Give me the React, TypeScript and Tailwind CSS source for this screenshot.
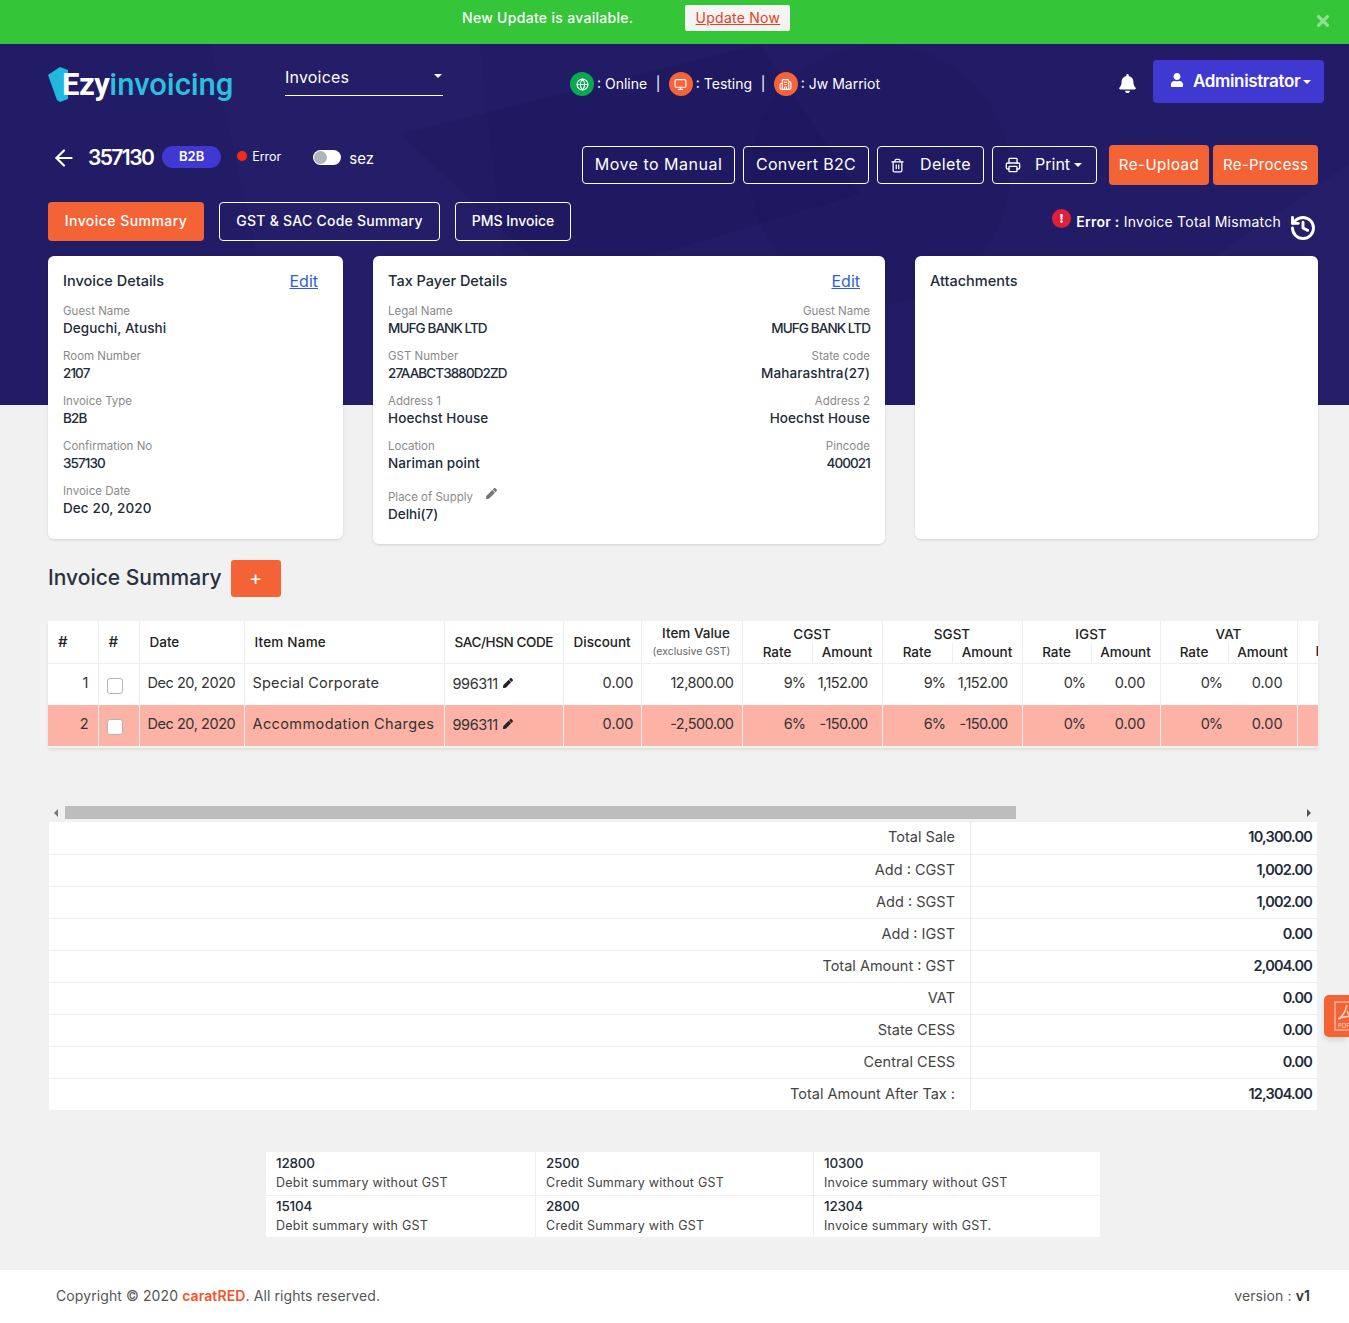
import React from 'react';
import { ArrowLeft, Globe, Monitor, Building2, Printer, Trash2, History } from 'lucide-react';
import { FaBell, FaUser, FaTimes, FaPen, FaExclamation } from 'react-icons/fa';

const invoiceFields = [
  ['Guest Name', 'Deguchi, Atushi'],
  ['Room Number', '2107'],
  ['Invoice Type', 'B2B'],
  ['Confirmation No', '357130'],
  ['Invoice Date', 'Dec 20, 2020'],
];

const payerFields = [
  ['Legal Name', 'MUFG BANK LTD', 'Guest Name', 'MUFG BANK LTD'],
  ['GST Number', '27AABCT3880D2ZD', 'State code', 'Maharashtra(27)'],
  ['Address 1', 'Hoechst House', 'Address 2', 'Hoechst House'],
  ['Location', 'Nariman point', 'Pincode', '400021'],
];

const rows = [
  {
    n: '1',
    name: 'Special Corporate',
    value: '12,800.00',
    rate: '9%',
    amount: '1,152.00',
    bg: 'bg-white',
  },
  {
    n: '2',
    name: 'Accommodation Charges',
    value: '-2,500.00',
    rate: '6%',
    amount: '-150.00',
    bg: 'bg-[#fdb2a6]',
  },
];

const totals = [
  ['Total Sale', '10,300.00'],
  ['Add : CGST', '1,002.00'],
  ['Add : SGST', '1,002.00'],
  ['Add : IGST', '0.00'],
  ['Total Amount : GST', '2,004.00'],
  ['VAT', '0.00'],
  ['State CESS', '0.00'],
  ['Central CESS', '0.00'],
  ['Total Amount After Tax :', '12,304.00'],
];

const summary = [
  [
    ['12800', 'Debit summary without GST'],
    ['2500', 'Credit Summary without GST'],
    ['10300', 'Invoice summary without GST'],
  ],
  [
    ['15104', 'Debit summary with GST'],
    ['2800', 'Credit Summary with GST'],
    ['12304', 'Invoice summary with GST.'],
  ],
];

const th = 'border-r border-[#eeeeee] font-medium text-[13.5px] text-[#222222] p-0';
const td = 'border-r border-[#eeeeee] text-[14.5px] text-[#333333] p-0 pb-[3px]';
const tdRate = 'p-0 pb-[3px] text-right text-[14.5px] text-[#333333] tracking-[-1px]';

function Field({ label, value, right }: { label: string; value: string; right?: boolean }) {
  const caps = value === value.toUpperCase();
  return (
    <div className={`h-[45px] ${right ? 'text-right' : ''}`}>
      <div className="text-[11.5px] leading-[16px] text-[#8a8a8a]">{label}</div>
      <div className={`mt-[-1px] text-[13.5px] leading-[20px] font-medium text-[#222b3a] ${caps ? 'tracking-[-0.9px]' : 'tracking-[0.1px]'}`}>
        {value}
      </div>
    </div>
  );
}

function StatusIcon({ color, children }: { color: string; children: React.ReactNode }) {
  return (
    <span className={`flex h-[24px] w-[24px] items-center justify-center rounded-full text-white ${color}`}>
      {children}
    </span>
  );
}

export default function App() {
  return (
    <div className="relative min-h-[1323px] bg-[#f1f1f1] font-['Inter',sans-serif]">
      {/* update banner */}
      <div className="relative flex h-[44px] items-start bg-[#34c538] pt-[5px]">
        <span className="ml-[462px] mt-[2px] text-[14px] font-medium tracking-[0.3px] text-white">New Update is available.</span>
        <a className="ml-[52px] flex h-[26px] w-[105px] items-center justify-center rounded-[2px] bg-[#f4f4f4] pb-[1px] text-[14px] tracking-[0.25px] text-[#e8401c] underline">
          Update Now
        </a>
        <FaTimes className="absolute right-[17px] top-[12px] text-[#8fdf92]" size={18} />
      </div>

      {/* hero */}
      <div className="relative h-[361px] overflow-hidden bg-[#221c67] pl-[48px] pr-[31px] text-white">
        <svg className="absolute inset-0 h-full w-full" viewBox="0 0 1349 361" preserveAspectRatio="none">
          <path d="M210 0 L290 361 L520 361 L480 0 Z" fill="#ffffff" opacity="0.012" />
          <path d="M400 90 L760 0 L860 150 L560 240 Z" fill="#000033" opacity="0.08" />
          <circle cx="880" cy="130" r="130" fill="#000033" opacity="0.06" />
          <path d="M1000 361 L1349 120 L1349 361 Z" fill="#ffffff" opacity="0.015" />
        </svg>

        <div className="relative flex h-[102px] items-start">
          <div className="mt-[21px] flex w-[237px] shrink-0 items-center">
            <svg width="20" height="36" viewBox="0 0 20 36" className="mr-[-6px] shrink-0">
              <path d="M0 8 L12 0 L20 3 L20 32 L12 35 L9 33 Z" fill="#21b8e0" />
            </svg>
            <span className="mt-[1px] font-['Roboto',sans-serif] text-[31px] leading-[38px] font-bold tracking-[-0.5px]">Ezy</span>
            <span className="mt-[1px] font-['Roboto',sans-serif] text-[31px] leading-[38px] font-medium tracking-[-0.1px] text-[#2bc0dd]">invoicing</span>
          </div>
          <div className="mt-[22px] flex h-[30px] w-[158px] shrink-0 justify-between border-b border-white">
            <span className="text-[16px] leading-[22px] tracking-[0.2px]">Invoices</span>
            <span className="mr-[1px] mt-[8px] h-0 w-0 border-x-[4.5px] border-t-[4.5px] border-x-transparent border-t-white" />
          </div>
          <div className="ml-[127px] mt-[28px] flex shrink-0 items-center text-[14px]">
            <StatusIcon color="bg-[#0aa84f]"><Globe size={13} /></StatusIcon>
            <span className="ml-[3px] pb-[2px]">: Online</span>
            <span className="mx-[8.5px] pb-[2px]">|</span>
            <StatusIcon color="bg-[#f4633a]"><Monitor size={13} /></StatusIcon>
            <span className="ml-[3px] pb-[2px]">: Testing</span>
            <span className="mx-[8.5px] pb-[2px]">|</span>
            <StatusIcon color="bg-[#f4633a]"><Building2 size={13} /></StatusIcon>
            <span className="ml-[3px] pb-[2px]">: Jw Marriot</span>
          </div>
          <FaBell className="ml-auto mt-[30px] mr-[16px] shrink-0" size={19} />
          <div className="mr-[-6px] mt-[16px] flex h-[43px] w-[171px] shrink-0 items-center rounded-[4px] bg-[#3f39d1] pl-[17px] text-[17px] font-semibold">
            <FaUser size={14} className="mb-[4px]" />
            <span className="ml-[9px] pt-[1px] tracking-[-0.35px]">Administrator</span>
            <span className="ml-[3px] h-0 w-0 border-x-[4.5px] border-t-[4.5px] border-x-transparent border-t-white" />
          </div>
        </div>

        <div className="relative flex h-[56px] items-start">
          <ArrowLeft size={26} strokeWidth={2} className="ml-[3px] mt-[-1px] shrink-0" />
          <span className="ml-[11px] text-[21px] leading-[24px] font-semibold tracking-[-1.6px]">357130</span>
          <span className="ml-[9px] flex h-[22px] w-[59px] items-center justify-center rounded-full bg-[#3f39d1] text-[13px] font-semibold">B2B</span>
          <span className="ml-[16px] mt-[5px] h-[10px] w-[10px] rounded-full bg-[#f62b12]" />
          <span className="ml-[5px] mt-[2px] text-[12.5px] leading-[18px]">Error</span>
          <span className="relative ml-[32px] mt-[4px] h-[15px] w-[28px] rounded-full bg-white">
            <span className="absolute left-[1px] top-[1px] h-[13px] w-[13px] rounded-full bg-[#adb5bd]" />
          </span>
          <span className="ml-[8px] mt-[2px] text-[15px] leading-[22px]">sez</span>

          <button className="ml-[208px] h-[38px] w-[153px] shrink-0 rounded-[4px] border border-white pb-[2px] text-[16px] tracking-[0.5px]">Move to Manual</button>
          <button className="ml-[8px] h-[38px] w-[126px] shrink-0 rounded-[4px] border border-white pb-[2px] text-[16px] tracking-[0.35px]">Convert B2C</button>
          <button className="ml-[8px] flex h-[38px] w-[107px] shrink-0 items-center rounded-[4px] border border-white pl-[12px] text-[16px] tracking-[0.4px]">
            <Trash2 size={15} />
            <span className="ml-[15px] pb-[2px]">Delete</span>
          </button>
          <button className="ml-[8px] flex h-[38px] w-[105px] shrink-0 items-center rounded-[4px] border border-white pl-[12px] text-[16px]">
            <Printer size={16} />
            <span className="ml-[14px] pb-[2px]">Print</span>
            <span className="ml-[4px] h-0 w-0 border-x-[4.5px] border-t-[4.5px] border-x-transparent border-t-white" />
          </button>
          <button className="ml-[12px] mt-[-1px] h-[40px] w-[100px] shrink-0 rounded-[4px] bg-[#f46336] text-[15px] tracking-[0.5px]">Re-Upload</button>
          <button className="ml-[4px] mt-[-1px] h-[40px] w-[105px] shrink-0 rounded-[4px] bg-[#f46336] text-[15px] tracking-[0.3px]">Re-Process</button>
        </div>

        <div className="relative flex h-[39px] items-start">
          <button className="h-[39px] w-[156px] shrink-0 rounded-[4px] bg-[#f46336] pb-[2px] text-[14px] font-medium tracking-[0.45px]">Invoice Summary</button>
          <button className="ml-[15px] h-[39px] w-[221px] shrink-0 rounded-[4px] border border-white pb-[2px] text-[14px] font-medium tracking-[0.25px]">GST &amp; SAC Code Summary</button>
          <button className="ml-[15px] h-[39px] w-[116px] shrink-0 rounded-[4px] border border-white pb-[2px] text-[14px] font-medium">PMS Invoice</button>
          <span className="ml-auto mt-[7px] flex h-[19px] w-[19px] shrink-0 items-center justify-center rounded-full bg-[#e01f3d]">
            <FaExclamation size={9} />
          </span>
          <span className="ml-[5px] mt-[10px] text-[14px] leading-[20px] tracking-[0.25px]"><b className="font-semibold">Error :</b> Invoice Total Mismatch</span>
          <History size={28} strokeWidth={2.5} className="ml-[8px] mt-[12px] mr-[1px] shrink-0" />
        </div>
      </div>

      {/* detail cards */}
      <div className="mt-[-149px] flex items-start pl-[48px] pr-[31px]">
        <div className="relative h-[283px] w-[295px] shrink-0 rounded-[6px] bg-white px-[15px] pt-[14px] shadow-sm">
          <div className="flex h-[33px] items-start justify-between pr-[10px]">
            <span className="text-[14.5px] font-medium text-[#222b3a]">Invoice Details</span>
            <a className="mt-[-1px] text-[16px] text-[#2c5fdc] underline">Edit</a>
          </div>
          {invoiceFields.map(([label, value]) => (
            <Field key={label} label={label} value={value} />
          ))}
        </div>

        <div className="relative ml-[30px] h-[288px] w-[512px] shrink-0 rounded-[6px] bg-white px-[15px] pt-[14px] shadow-sm">
          <div className="flex h-[33px] items-start justify-between pr-[10px]">
            <span className="text-[14.5px] font-medium text-[#222b3a]">Tax Payer Details</span>
            <a className="mt-[-1px] text-[16px] text-[#2c5fdc] underline">Edit</a>
          </div>
          {payerFields.map(([l1, v1, l2, v2]) => (
            <div key={l1} className="flex justify-between">
              <Field label={l1} value={v1} />
              <Field label={l2} value={v2} right />
            </div>
          ))}
          <div className="pt-[6px]">
            <div className="flex text-[11.5px] leading-[16px] text-[#8a8a8a]">
              Place of Supply
              <FaPen size={11} className="ml-[13px] mt-[-1px] text-[#777777]" />
            </div>
            <div className="mt-[-1px] text-[13.5px] leading-[20px] font-medium text-[#222b3a]">Delhi(7)</div>
          </div>
        </div>

        <div className="relative ml-[30px] h-[283px] w-[403px] shrink-0 rounded-[6px] bg-white px-[15px] pt-[12px] shadow-sm">
          <span className="text-[14.5px] font-medium text-[#222b3a]">Attachments</span>
        </div>
      </div>

      {/* invoice summary */}
      <div className="mt-[16px] flex h-[37px] items-center pl-[48px]">
        <h2 className="pb-[2px] text-[21px] font-medium text-[#2a3140]">Invoice Summary</h2>
        <button className="ml-[9px] h-[37px] w-[50px] rounded-[3px] bg-[#f46336] pb-[2px] text-[20px] text-white">+</button>
      </div>

      <div className="ml-[48px] mr-[31px] mt-[24px] h-[127px] overflow-hidden shadow-[0_2px_3px_rgba(0,0,0,0.08)]">
        <table className="w-[1340px] table-fixed border-collapse">
          <colgroup>
            <col className="w-[50px]" />
            <col className="w-[41px]" />
            <col className="w-[105px]" />
            <col className="w-[200px]" />
            <col className="w-[119px]" />
            <col className="w-[78px]" />
            <col className="w-[101px]" />
            <col className="w-[70px]" />
            <col className="w-[70px]" />
            <col className="w-[70px]" />
            <col className="w-[70px]" />
            <col className="w-[69px]" />
            <col className="w-[69px]" />
            <col className="w-[68px]" />
            <col className="w-[69px]" />
            <col />
          </colgroup>
          <thead className="bg-white">
            <tr className="h-[22px]">
              <th rowSpan={2} className={`${th} text-left pl-[10px] text-[15px]`}>#</th>
              <th rowSpan={2} className={`${th} text-left pl-[10px] text-[15px]`}>#</th>
              <th rowSpan={2} className={`${th} text-left pl-[10px]`}>Date</th>
              <th rowSpan={2} className={`${th} text-left pl-[10px] tracking-[0.2px]`}>Item Name</th>
              <th rowSpan={2} className={`${th} text-left pl-[10px] tracking-[-0.4px]`}>SAC/HSN CODE</th>
              <th rowSpan={2} className={`${th} text-left pl-[10px]`}>Discount</th>
              <th rowSpan={2} className={`${th} text-center leading-[18px]`}>
                <div className="pl-[9px]">Item Value</div>
                <div className="mt-[2px] text-[10.5px] leading-[16px] font-normal text-[#666666]">(exclusive GST)</div>
              </th>
              <th colSpan={2} className={`${th} leading-[18px] pt-[3px]`}>CGST</th>
              <th colSpan={2} className={`${th} leading-[18px] pt-[3px]`}>SGST</th>
              <th colSpan={2} className={`${th} leading-[18px] pt-[3px]`}>IGST</th>
              <th colSpan={2} className={`${th} leading-[18px] pt-[3px]`}>VAT</th>
              <th rowSpan={2} className={`${th} text-left pl-[18px] align-bottom pb-[3px] leading-[18px]`}>I</th>
            </tr>
            <tr className="h-[20px] border-b border-[#eeeeee]">
              {['c', 's', 'i', 'v'].map((k) => (
                <React.Fragment key={k}>
                  <th className={`${th} pb-[2px] leading-[18px]`}>Rate</th>
                  <th className={`${th} pb-[2px] leading-[18px]`}>Amount</th>
                </React.Fragment>
              ))}
            </tr>
          </thead>
          <tbody>
            {rows.map((r) => (
              <tr key={r.n} className={`h-[41px] ${r.bg}`}>
                <td className={`${td} pr-[9px] text-right`}>{r.n}</td>
                <td className={td}>
                  <input type="checkbox" readOnly className="ml-[8px] mt-[7px] block h-[16px] w-[16px] appearance-none rounded-[3px] border border-[#b5b5b5] bg-white" />
                </td>
                <td className={`${td} pl-[8px] tracking-[-0.45px]`}>Dec 20, 2020</td>
                <td className={`${td} pl-[8px] ${r.n === '2' ? 'tracking-[0.4px]' : 'tracking-[0.2px]'}`}>{r.name}</td>
                <td className={`${td} pl-[8px] tracking-[-0.4px]`}>
                  <span className="flex items-center">
                    <span className="mt-[3px]">996311</span>
                    <FaPen size={10} className="ml-[5px] text-[#222222]" />
                  </span>
                </td>
                <td className={`${td} pr-[7px] text-right`}>0.00</td>
                <td className={`${td} pr-[8px] text-right tracking-[-0.5px]`}>{r.value}</td>
                <td className={`${tdRate} pr-[7px]`}>{r.rate}</td>
                <td className={`${td} pr-[14px] text-right tracking-[-0.6px]`}>{r.amount}</td>
                <td className={`${tdRate} pr-[7px]`}>{r.rate}</td>
                <td className={`${td} pr-[14px] text-right tracking-[-0.6px]`}>{r.amount}</td>
                <td className={`${tdRate} pr-[6px]`}>0%</td>
                <td className={`${td} pr-[14px] text-right`}>0.00</td>
                <td className={`${tdRate} pr-[6px]`}>0%</td>
                <td className={`${td} pr-[14px] text-right`}>0.00</td>
                <td className={td} />
              </tr>
            ))}
          </tbody>
        </table>
      </div>

      {/* horizontal scrollbar */}
      <div className="ml-[48px] mr-[31px] mt-[58px] flex h-[13px] items-center">
        <span className="ml-[6px] mr-[7px] h-0 w-0 border-y-[4px] border-r-[4px] border-y-transparent border-r-[#777777]" />
        <div className="h-[13px] w-[951px] bg-[#bdbdbd]" />
        <span className="ml-auto mr-[7px] h-0 w-0 border-y-[4px] border-l-[4px] border-y-transparent border-l-[#555555]" />
      </div>

      {/* totals */}
      <div className="ml-[49px] mr-[32px] mt-[3px] bg-white">
        {totals.map(([label, value], i) => (
          <div key={label} className={`flex h-[32px] items-center ${i > 0 ? 'border-t border-[#eeeeee]' : ''}`}>
            <div className="flex h-full w-[922px] items-center justify-end border-r border-[#eeeeee] pb-[2px] pr-[15px] text-[14.5px] text-[#444444]">
              {label}
            </div>
            <div className="flex-1 pb-[2px] pr-[5px] text-right text-[14.5px] font-semibold tracking-[-0.8px] text-[#222b3a]">{value}</div>
          </div>
        ))}
      </div>

      {/* debit / credit summary */}
      <div className="ml-[266px] mt-[42px] w-[834px] bg-white">
        {summary.map((row, i) => (
          <div key={i} className={`grid grid-cols-[269px_278px_287px] ${i > 0 ? 'h-[42px] border-t border-[#eeeeee]' : 'h-[43px]'}`}>
            {row.map(([num, label], j) => (
              <div key={label} className={`pl-[10px] ${i > 0 ? 'pt-[1px]' : 'pt-[2px]'} ${j > 0 ? 'border-l border-[#eeeeee]' : ''}`}>
                <div className="text-[13.5px] leading-[18px] font-medium tracking-[-0.2px] text-[#222b3a]">{num}</div>
                <div className="mt-[1px] text-[12.5px] leading-[19px] tracking-[0.25px] text-[#444444]">{label}</div>
              </div>
            ))}
          </div>
        ))}
      </div>

      {/* footer */}
      <div className="mt-[33px] flex h-[53px] items-center justify-between bg-white pb-[2px] pl-[56px] pr-[39px] text-[14px] tracking-[0.1px] text-[#555555]">
        <span>
          Copyright © 2020 <b className="font-semibold text-[#f4532a]">caratRED</b>. All rights reserved.
        </span>
        <span>version : <b className="font-semibold text-[#333333]">v1</b></span>
      </div>

      {/* floating pdf tab */}
      <div className="absolute right-0 top-[995px] flex h-[42px] w-[25px] items-center overflow-hidden rounded-l-[5px] bg-[#f46336] pl-[10px] shadow-md">
        <svg width="26" height="30" viewBox="0 0 26 30" className="shrink-0">
          <rect x="1" y="1" width="24" height="28" fill="none" stroke="#ffc9b5" strokeWidth="1.2" />
          <path d="M13 4 C11 12 8 16 4 18 M13 10 C15 15 18 17 22 18 M5 18 C10 15 16 15 21 17" fill="none" stroke="#ffd9ca" strokeWidth="1.4" />
          <text x="4" y="27" fontSize="6" fill="#ffd9ca">PDF</text>
        </svg>
      </div>
    </div>
  );
}
